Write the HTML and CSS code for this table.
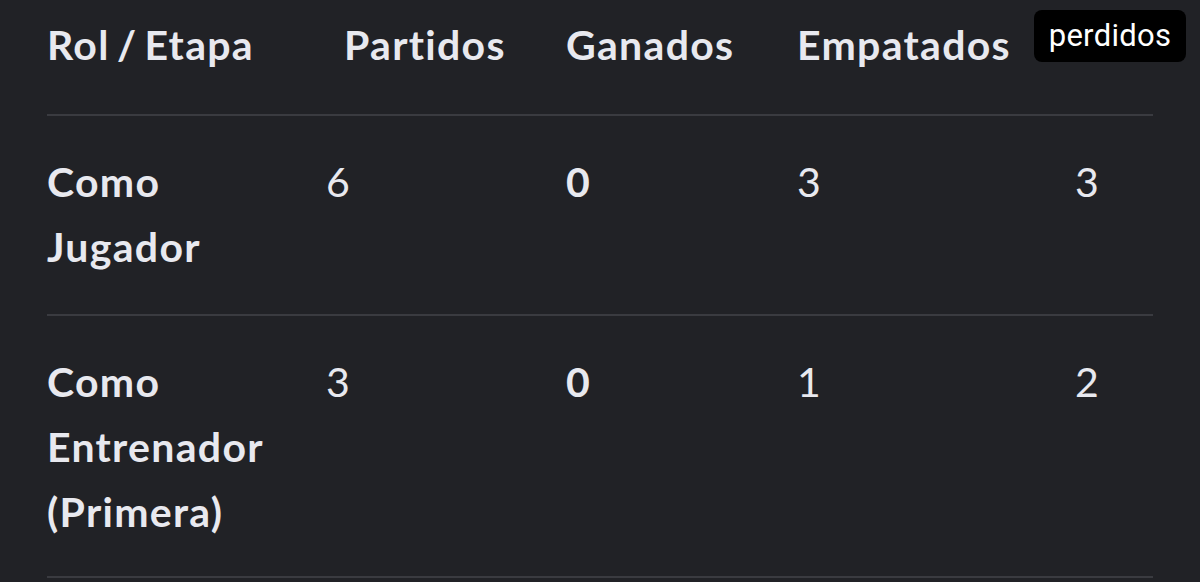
FILE: index.html
```html
<!DOCTYPE html>
<html>
<head>
  <title>Estadísticas</title>
  <link rel="stylesheet" href="styles.css">
</head>
<body>
  <div class="stats-container">
    <table class="stats-table">
      <colgroup>
        <col class="col-role">
        <col class="col-played">
        <col class="col-won">
        <col class="col-drawn">
        <col class="col-lost">
      </colgroup>
      <thead>
        <tr>
          <th class="role-head">Rol / Etapa</th>
          <th class="shifted">Partidos</th>
          <th>Ganados</th>
          <th>Empatados</th>
          <th class="lost-head"><span class="tooltip">perdidos</span></th>
        </tr>
      </thead>
      <tbody>
        <tr>
          <th>Como<br>Jugador</th>
          <td>6</td>
          <td class="strong">0</td>
          <td>3</td>
          <td>3</td>
        </tr>
        <tr>
          <th>Como<br>Entrenador<br>(Primera)</th>
          <td>3</td>
          <td class="strong">0</td>
          <td>1</td>
          <td>2</td>
        </tr>
      </tbody>
    </table>
  </div>
</body>
</html>
```

FILE: styles.css
```css
body {
  margin: 0;
  background-color: #212226;
  font-family: Lato, "Open Sans", sans-serif;
  color: #e8e9ef;
}

.stats-container {
  padding-left: 47px;
  width: 1106px;
}

.stats-table {
  width: 1106px;
  table-layout: fixed;
  border-collapse: collapse;
  font-size: 41px;
  line-height: 65px;
  letter-spacing: 1.3px;
  font-variant-ligatures: none;
}

.col-role { width: 279px; }
.col-played { width: 240px; }
.col-won { width: 231px; }
.col-drawn { width: 278px; }
.col-lost { width: 78px; }

.stats-table th,
.stats-table td {
  text-align: left;
  vertical-align: top;
  padding: 33px 0 35px 0;
  border-bottom: 2px solid #3a3b40;
}

.stats-table tbody tr:last-child th,
.stats-table tbody tr:last-child td {
  padding-bottom: 32px;
}

.stats-table th {
  font-weight: 700;
}

.stats-table td {
  font-weight: 400;
}

.stats-table thead th {
  padding-top: 12px;
  padding-bottom: 37px;
  white-space: nowrap;
}

.stats-table thead .role-head {
  word-spacing: -4px;
}

.stats-table thead .shifted {
  padding-left: 18px;
}

.stats-table td.strong {
  font-weight: 700;
}

.lost-head {
  position: relative;
}

.tooltip {
  position: absolute;
  top: 10px;
  left: -41px;
  width: 152px;
  height: 52px;
  background-color: #000;
  border-radius: 8px;
  color: #fff;
  font-family: Roboto, sans-serif;
  font-weight: 400;
  font-size: 31px;
  line-height: 52px;
  text-align: center;
  letter-spacing: 0.3px;
}
```
